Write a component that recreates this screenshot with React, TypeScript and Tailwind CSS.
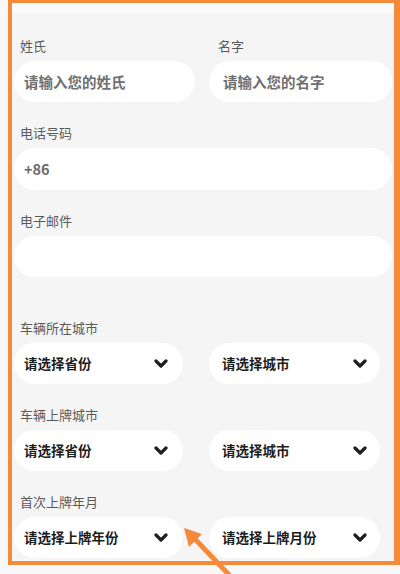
import React from 'react';

const FONT = '"Noto Sans CJK SC", "Noto Sans", sans-serif';
const ORANGE = '#f68a3b';

function Label({ text, className = '' }: { text: string; className?: string }) {
  return (
    <div className={`h-[18px] leading-[18px] text-[13px] text-[#5a5a5a] mb-[6px] ${className}`}>{text}</div>
  );
}

function TextBox({ placeholder, className = '' }: { placeholder: string; className?: string }) {
  return (
    <div className={`rounded-full bg-white flex items-center ${className}`}>
      <span className="text-[14.5px] font-semibold text-[#707070]">{placeholder}</span>
    </div>
  );
}

function Chevron() {
  return (
    <svg width="14" height="9" viewBox="0 0 14 9" fill="none">
      <polyline points="2,2 7,7 12,2" stroke="#1f1f1f" strokeWidth="3.2" strokeLinecap="round" strokeLinejoin="round" />
    </svg>
  );
}

function Select({ text, className = '' }: { text: string; className?: string }) {
  return (
    <div className={`h-[41px] rounded-full bg-white flex items-center justify-between ${className}`}>
      <span className="text-[13.5px] font-bold text-[#1c1c1c]">{text}</span>
      <Chevron />
    </div>
  );
}

function SelectRow({ label, left, right, top }: { label: string; left: string; right: string; top: string }) {
  return (
    <div className={top}>
      <Label text={label} className="pl-[6px]" />
      <div className="grid grid-cols-[181px_183px] gap-x-[14px]">
        <Select text={left} className="w-[169px] pl-[10px] pr-[15px]" />
        <Select text={right} className="w-[171px] pl-[13px] pr-[13px]" />
      </div>
    </div>
  );
}

export default function App() {
  return (
    <div className="relative w-[400px] h-[574px] overflow-hidden bg-[#f8f8f8]" style={{ fontFamily: FONT }}>
      <div className="ml-[8px] w-[392px] border-l-4 border-t-[3px] border-r-[6px] border-b-4 border-[#f68a3b] bg-[#f5f5f5]">
        <div className="h-[10px] bg-[#fbfbfb]" />
        <div className="px-[2px] pt-[24px] pb-[3px]">
          <div className="grid grid-cols-[181px_183px] gap-x-[14px]">
            <div>
              <Label text="姓氏" className="pl-[6px]" />
              <TextBox placeholder="请输入您的姓氏" className="h-[41px] pl-[10px]" />
            </div>
            <div>
              <Label text="名字" className="pl-[9px]" />
              <TextBox placeholder="请输入您的名字" className="h-[41px] pl-[14px]" />
            </div>
          </div>

          <div className="mt-[22px]">
            <Label text="电话号码" className="pl-[6px]" />
            <div className="h-[42px] rounded-full bg-white flex items-center pl-[10px]">
              <span className="text-[14.5px] font-bold text-[#6a6a6a]">+86</span>
            </div>
          </div>

          <div className="mt-[22px]">
            <Label text="电子邮件" className="pl-[6px]" />
            <div className="h-[41px] rounded-full bg-white" />
          </div>

          <SelectRow top="mt-[42px]" label="车辆所在城市" left="请选择省份" right="请选择城市" />
          <SelectRow top="mt-[22px]" label="车辆上牌城市" left="请选择省份" right="请选择城市" />
          <SelectRow top="mt-[22px]" label="首次上牌年月" left="请选择上牌年份" right="请选择上牌月份" />
        </div>
      </div>

      {/* annotation arrow */}
      <svg className="absolute left-0 top-0 pointer-events-none" width="400" height="574" viewBox="0 0 400 574">
        <line x1="232" y1="578" x2="194" y2="538" stroke={ORANGE} strokeWidth="5" />
        <polygon points="184,528 202,534 189,547" fill={ORANGE} />
      </svg>
    </div>
  );
}
